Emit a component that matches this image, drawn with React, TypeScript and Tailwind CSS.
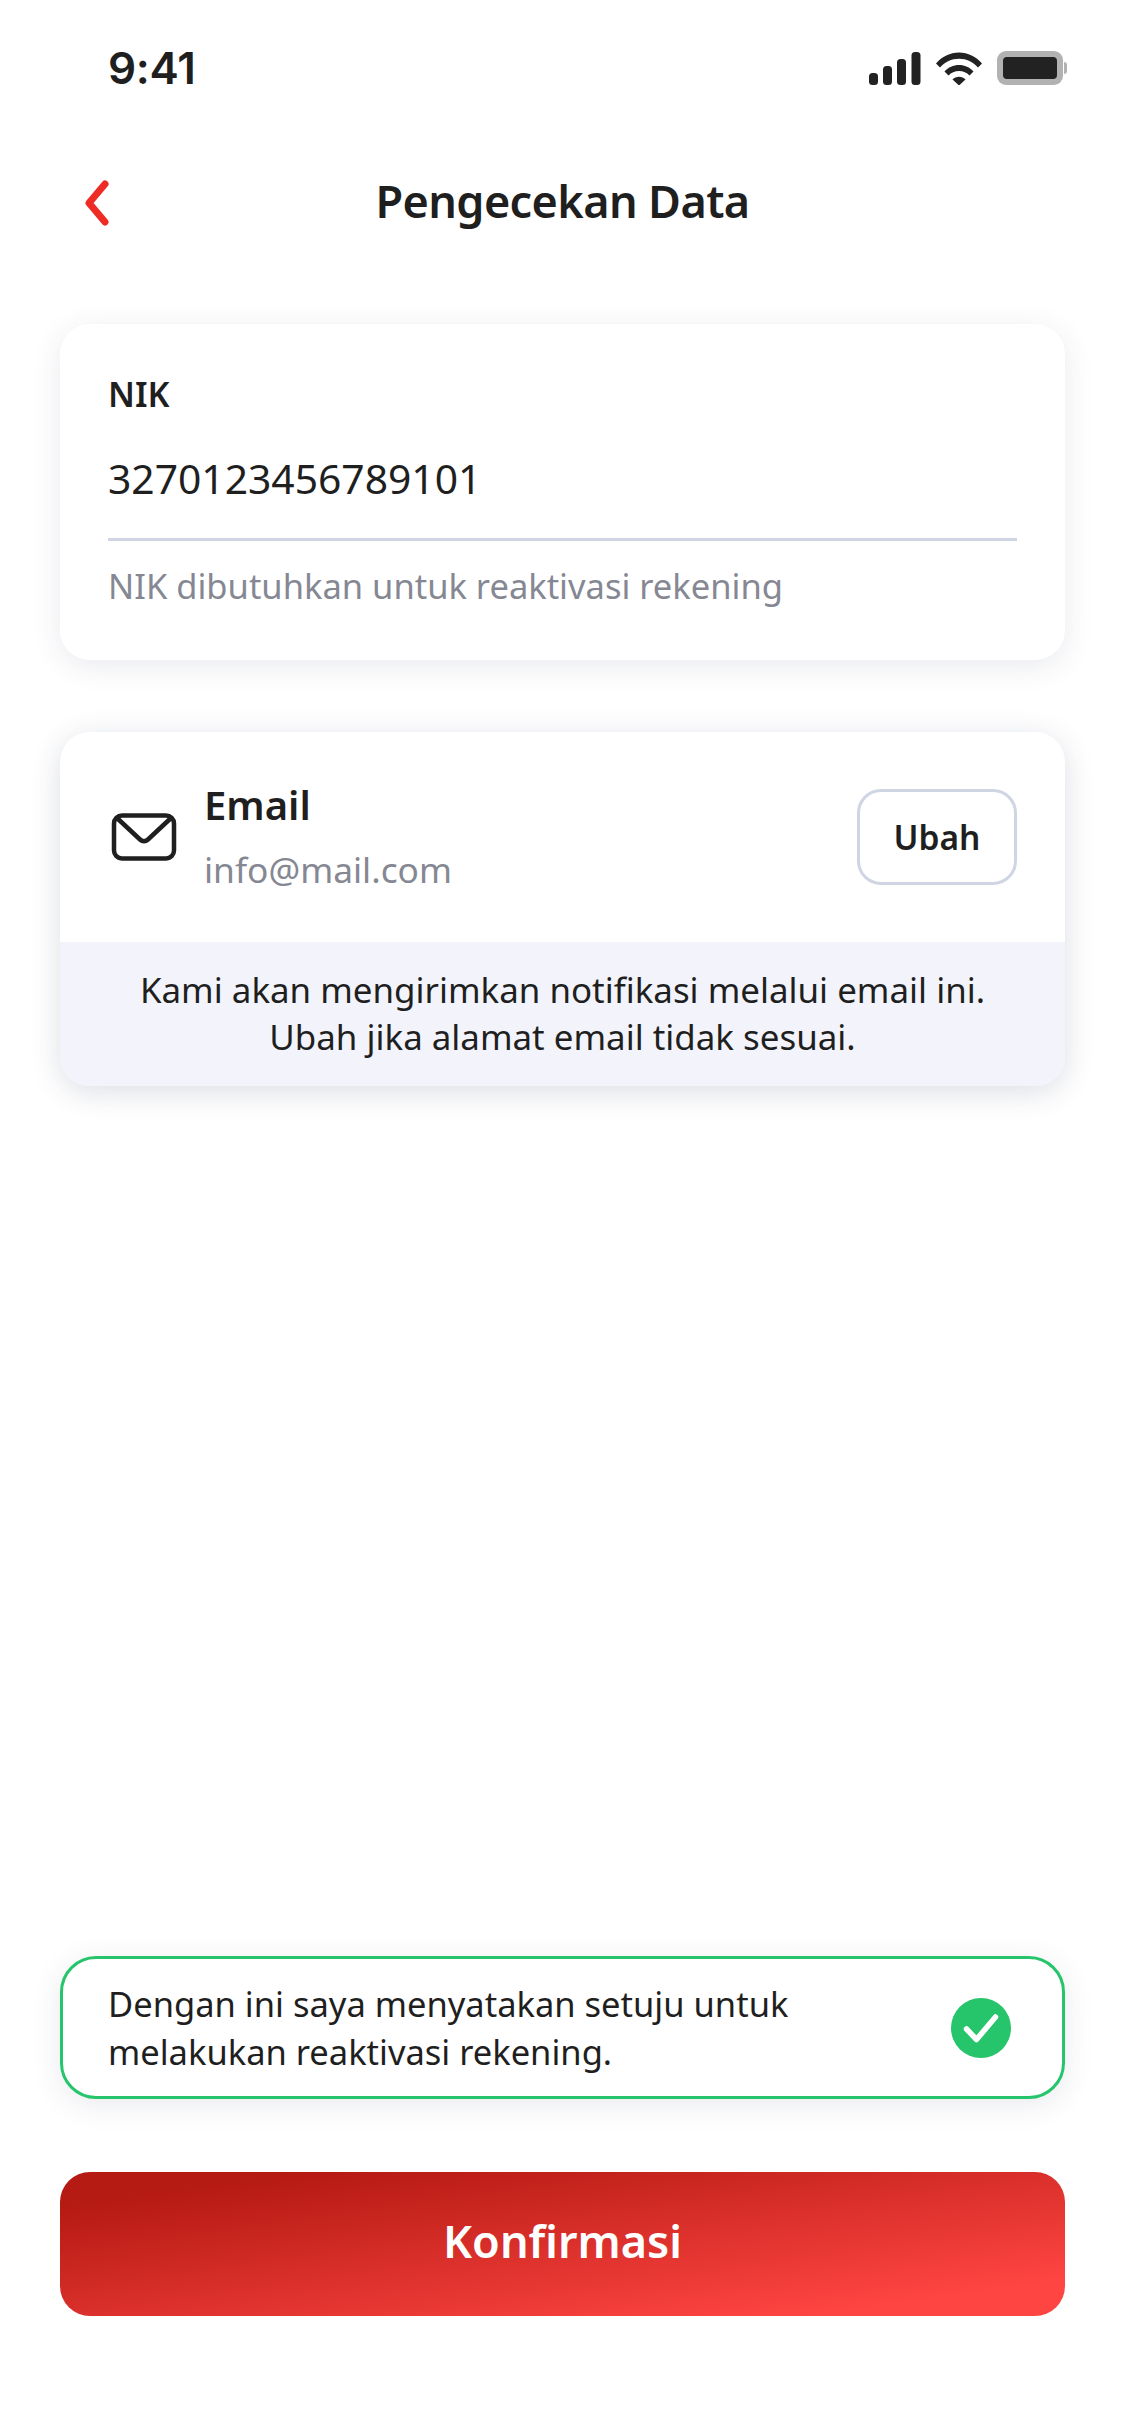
import React from "react";

const font = { fontFamily: '"Noto Sans", sans-serif' };

function Signal() {
  return (
    <svg width="52" height="33" viewBox="0 0 52 33" fill="#222">
      <rect x="0" y="21" width="9" height="12" rx="3.5" />
      <rect x="14" y="14" width="9" height="19" rx="3.5" />
      <rect x="28" y="7" width="9" height="26" rx="3.5" />
      <rect x="42.5" y="0" width="9" height="33" rx="3.5" />
    </svg>
  );
}

function Wifi() {
  return (
    <svg width="46" height="33" viewBox="0 0 46 33" fill="#222">
      <path d="M0 11.5C6 4.5 14 0.5 23 0.5s17 4 23 11l-4 4C37 10 30.5 6.8 23 6.8S9 10 4 15.5z" />
      <path d="M8.5 19.5C12.3 15.3 17.3 13 23 13s10.7 2.3 14.5 6.5l-4 4C30.8 20.5 27.2 19 23 19s-7.800 1.500-10.500 4.500z" />
      <path d="M16.500 27.500C18.200 25.700 20.500 24.800 23 24.800s4.800.9 6.500 2.700L23 33.500z" />
    </svg>
  );
}

function Battery() {
  return (
    <div className="flex items-center">
      <div className="w-[66px] h-[34px] rounded-[9px] bg-[#b2b2b2] p-[6px]">
        <div className="w-full h-full rounded-[4px] bg-[#222222]" />
      </div>
      <div className="w-[3px] h-[12px] ml-[1px] rounded-r-[3px] bg-[#b2b2b2]" />
    </div>
  );
}

function Mail() {
  return (
    <svg width="66" height="48" viewBox="0 0 66 48" fill="none" stroke="#1f1f1f" strokeWidth="4.500" strokeLinejoin="round" strokeLinecap="round">
      <rect x="3" y="2.500" width="60" height="43" rx="8" />
      <path d="M6 5l23 21.500c2.400 2.200 5.600 2.200 8 0L60 5" />
    </svg>
  );
}

export default function App() {
  return (
    <div className="min-h-[2436px] w-full bg-white flex flex-col text-[#1f1f1f]" style={font}>
      <div className="h-[136px] pl-[108px] pr-[58px] flex items-center justify-between">
        <span className="text-[44px] font-semibold leading-none tracking-[-0.3px] font-['Inter',sans-serif]">9:41</span>
        <div className="flex items-center gap-[15px]">
          <Signal />
          <Wifi />
          <Battery />
        </div>
      </div>

      <div className="relative h-[134px] flex items-center justify-center">
        <svg className="absolute left-[82px] top-[44px]" width="30" height="46" viewBox="0 0 30 46" fill="none" stroke="#ee2b24" strokeWidth="7" strokeLinecap="round" strokeLinejoin="round">
          <path d="M23 4L7 23l16 19" />
        </svg>
        <h1 className="text-[45px] font-semibold leading-none tracking-[-0.6px] pb-[5px]">Pengecekan Data</h1>
      </div>

      <main className="flex-1 flex flex-col px-[60px] pt-[54px] pb-[120px]">
        <section className="h-[336px] rounded-[30px] bg-white shadow-[0_6px_30px_rgba(40,50,90,0.1)] px-[48px] pt-[47px]">
          <div className="text-[34px] font-semibold leading-[46px]">NIK</div>
          <div className="mt-[33px] text-[40.8px] leading-[56px]">3270123456789101</div>
          <div className="mt-[32px] h-[3px] bg-[#d0d5e3]" />
          <div className="mt-[22px] text-[34.5px] leading-[46px] text-[#858893]">NIK dibutuhkan untuk reaktivasi rekening</div>
        </section>

        <section className="mt-[72px] h-[354px] rounded-[30px] bg-white shadow-[0_6px_30px_rgba(40,50,90,0.16)] overflow-hidden flex flex-col">
          <div className="h-[210px] pl-[51px] pr-[48px] flex items-center">
            <Mail />
            <div className="ml-[27px] flex-1 flex flex-col pb-[5px]">
              <span className="text-[40px] font-semibold leading-[56px]">Email</span>
              <span className="mt-[13px] text-[35.3px] leading-[46px] text-[#858893]">info@mail.com</span>
            </div>
            <button className="w-[160px] h-[96px] rounded-[24px] border-[3px] border-[#d0d5e3] text-[33.5px] font-semibold">Ubah</button>
          </div>
          <div className="flex-1 bg-[#f3f4fb] flex flex-col items-center justify-center text-[34.9px] leading-[47px] text-center pb-[2px]">
            <p>Kami akan mengirimkan notifikasi melalui email ini.</p>
            <p>Ubah jika alamat email tidak sesuai.</p>
          </div>
        </section>

        <div className="flex-1" />

        <label className="h-[143px] rounded-[36px] border-[3px] border-[#26c46b] bg-white shadow-[0_6px_30px_rgba(40,50,90,0.1)] pl-[45px] pr-[51px] flex items-center justify-between">
          <span className="text-[34.5px] leading-[48px]">
            Dengan ini saya menyatakan setuju untuk
            <br />
            melakukan reaktivasi rekening.
          </span>
          <svg width="60" height="60" viewBox="0 0 60 60" className="shrink-0">
            <circle cx="30" cy="30" r="30" fill="#26c46b" />
            <path d="M15.500 31l10 10.500L44.500 19" fill="none" stroke="#fff" strokeWidth="5.500" strokeLinecap="round" strokeLinejoin="round" />
          </svg>
        </label>

        <button className="mt-[73px] h-[144px] shrink-0 rounded-[30px] bg-[linear-gradient(to_bottom_right,#b51a13_12%,#ff4542_88%)] text-white text-[45px] font-semibold pb-[6px]">
          Konfirmasi
        </button>
      </main>
    </div>
  );
}
